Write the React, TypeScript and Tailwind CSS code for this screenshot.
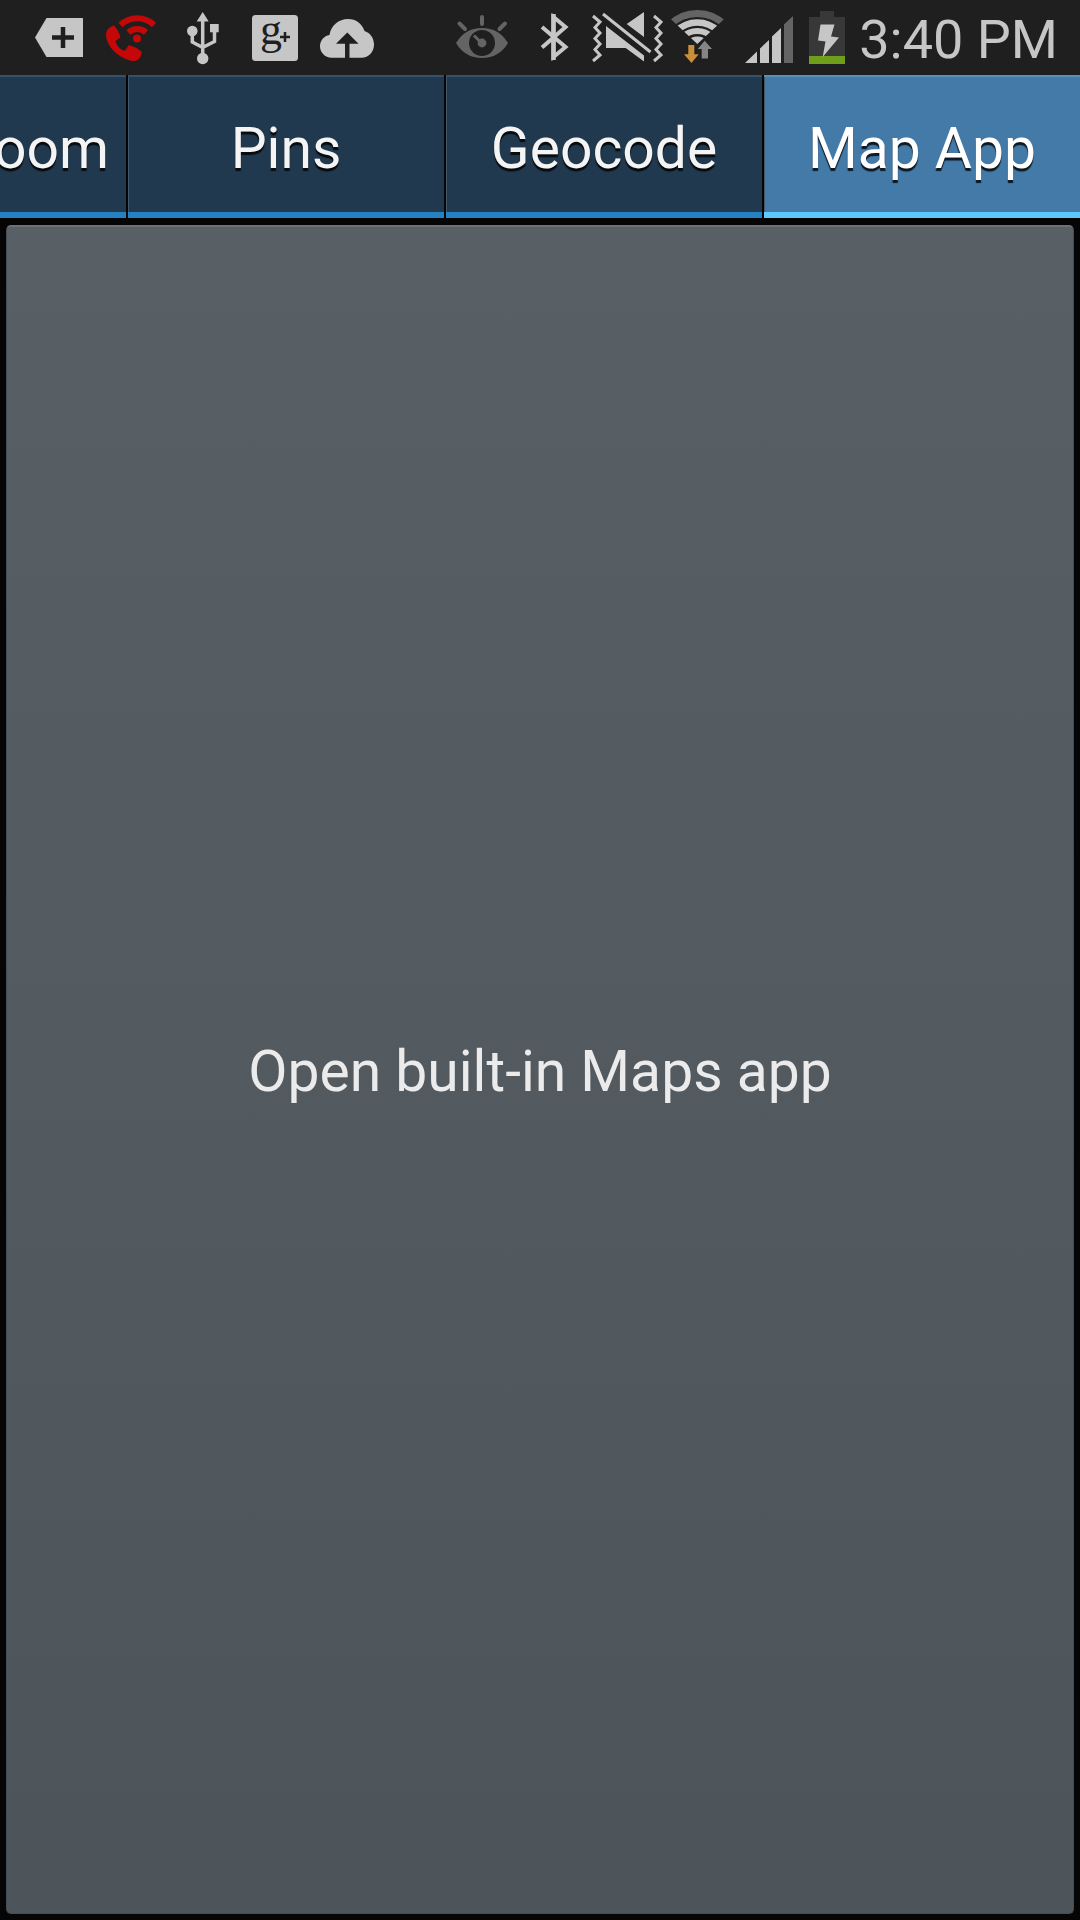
import type { ReactNode } from "react";

const LIGHT = "#c6c6c6";
const DIM = "#646464";
const BAR = "#1f1f1f";

function StatusIcon({ x, w = 72, label, children }: { x: number; w?: number; label: string; children: ReactNode }) {
  return (
    <svg width={w} height={75} viewBox={`${x} 0 ${w} 75`} role="img" aria-label={label} className="shrink-0">
      {children}
    </svg>
  );
}

function StatusBar() {
  return (
    <header className="flex h-[75px] items-center justify-between bg-[#1f1f1f] pr-[22px] pl-[23px]">
      <div className="flex">
        <StatusIcon x={23} label="More notifications">
          <path d="M35 37.500 46.500 18H82.500Q83 18 83 18.500V56.500Q83 57 82.500 57H46.500Z" fill={LIGHT} />
          <path d="M63 27V48M52 37.500H74" stroke={BAR} strokeWidth="4.500" />
        </StatusIcon>
        <StatusIcon x={95} label="Wi-Fi calling">
          <g fill="none" stroke="#c40808" strokeWidth="6">
            <path d="M120.500 25A24 24 0 0 1 154 25" />
            <path d="M128.500 32.500A13 13 0 0 1 146 32.500" />
          </g>
          <circle cx="137" cy="38.500" r="4" fill="#c40808" />
          <path
            d="M108 29Q111 25.500 114 25.500Q119 31 120.500 37.500L115.500 41Q117 48 124.500 51L129 45Q136 47 141.500 51.500Q142 56.500 138 59.500Q134.500 62 130 60.500C117 57 107 46 106 36Q106 31 108 29Z"
            fill="#c40808"
          />
        </StatusIcon>
        <StatusIcon x={167} label="USB connected">
          <path d="M202.700 12 208.700 21.500H196.700Z" fill={LIGHT} />
          <path d="M202.700 18V58M192.300 31V42L202.700 47.500M214.500 30V41.500L202.700 47.500" fill="none" stroke={LIGHT} strokeWidth="3.500" />
          <circle cx="192.300" cy="31" r="5.300" fill={LIGHT} />
          <circle cx="202.700" cy="58.500" r="5.700" fill={LIGHT} />
          <rect x="210" y="24" width="8.700" height="8.300" fill={LIGHT} />
        </StatusIcon>
        <StatusIcon x={239} label="Google+">
          <rect x="252" y="15" width="46" height="46" rx="3.500" fill={LIGHT} />
          <text x="260" y="44" fontSize="44" fill={BAR} fontFamily="Liberation Serif, serif">
            g
          </text>
          <path d="M285 32V42M280 37H290" stroke={BAR} strokeWidth="2.500" />
        </StatusIcon>
        <StatusIcon x={311} label="Upload complete">
          <path
            d="M331.500 57.700C325 57.700 320 52.500 320 46.300C320 40.500 324 36 329.500 35C331 25.500 338.500 19 348 19C356 19 362 23.500 364.500 31C370.500 33 374 38.500 374 44.500C374 52 368.500 57.700 361.500 57.700Z"
            fill={LIGHT}
          />
          <path d="M347.300 32.500 358.500 43.700H349.500V59H345V43.700H336Z" fill={BAR} />
        </StatusIcon>
      </div>

      <div className="flex items-center">
        <StatusIcon x={447} label="Smart stay">
          <path d="M456 43Q465 28 482 28T508 43Q499 58 482 58T456 43Z" fill={DIM} />
          <circle cx="482" cy="43" r="13" fill={BAR} />
          <circle cx="482" cy="43" r="4.400" fill={DIM} />
          <path d="M474 35.500 480 41.500" stroke={DIM} strokeWidth="3" />
          <path d="M482 17V24M459.500 23.500 465 29M505 23.500 499.500 29" stroke={DIM} strokeWidth="4" strokeLinecap="round" />
        </StatusIcon>
        <StatusIcon x={519} label="Bluetooth">
          <path d="M542 27 565.500 47 553.500 57V17L565.500 27 542 47.500" fill="none" stroke={LIGHT} strokeWidth="4" />
          <path d="M553.500 14V60" stroke={LIGHT} strokeWidth="4.500" />
        </StatusIcon>
        <StatusIcon x={591} label="Vibrate">
          <g fill="none" stroke={LIGHT} strokeWidth="3">
            <path d="M593 16 600 22 595 27.500 600 33 595 38.500 600 44 595 49.500 600 55 593 61" />
            <path d="M654 16 661 22 656 27.500 661 33 656 38.500 661 44 656 49.500 661 55 654 61" />
            <path d="M603 14 650.500 52" />
          </g>
          <path d="M626.700 24 644 12V37ZM606 26 644 55.500V61.500L625.700 48H606Z" fill={LIGHT} />
        </StatusIcon>
        <StatusIcon x={663} label="Wi-Fi">
          <clipPath id="wifi-fan">
            <path d="M697.300 44 668 16.500V0H727V16.500Z" />
          </clipPath>
          <g clipPath="url(#wifi-fan)" fill="none" stroke={LIGHT}>
            <circle cx="697.300" cy="52" r="38.500" stroke={DIM} strokeWidth="7" />
            <circle cx="697.300" cy="52" r="29.500" strokeWidth="6.500" />
            <circle cx="697.300" cy="52" r="21" strokeWidth="6" />
            <circle cx="697.300" cy="52" r="15.500" fill={LIGHT} stroke="none" />
          </g>
          <path d="M704.700 40.700 712 49H708V58.500H701.700V49H697.700Z" fill="#858585" stroke={BAR} strokeWidth="2" paintOrder="stroke" />
          <path d="M688.300 45H694.300V54.300H698.700L691.500 63 684 54.300H688.300Z" fill="#c9903a" stroke={BAR} strokeWidth="2" paintOrder="stroke" />
        </StatusIcon>
        <StatusIcon x={735} label="Signal strength">
          <path d="M745 63 757 51.500V63ZM760 63V48.500L769 40V63ZM772 63V36.500L781 28V63Z" fill={LIGHT} />
          <path d="M784 63V24.500L793 16V63Z" fill={DIM} />
        </StatusIcon>
        <StatusIcon x={807} w={52} label="Battery charging">
          <path d="M809 17H820V11H834V17H845V64H809Z" fill="#383838" />
          <path d="M809 56H845V64H809Z" fill="#6f9f1a" />
          <path d="M820.500 24.500H834.500L831 36.500 839 37.500 822.700 57 825.500 41.500 818 40.500Z" fill={LIGHT} />
        </StatusIcon>
        <time className="pt-[5px] text-[54px] leading-[70px] whitespace-nowrap text-[#c6c6c6]">3:40 PM</time>
      </div>
    </header>
  );
}

const TABS = [
  { label: "Pins", selected: false },
  { label: "Geocode", selected: false },
  { label: "Map App", selected: true },
];

function TabBar() {
  return (
    <div role="tablist" className="flex h-[143px] gap-[2px] text-[57px] leading-[68px]">
      <button
        type="button"
        role="tab"
        aria-selected={false}
        className="flex w-[126px] shrink-0 items-center justify-end overflow-hidden border-t-2 border-b-6 border-t-[#33516a] border-b-[#2681c4] bg-[#20394e] pt-2 pr-[17px] text-[#f4f4f4] [text-shadow:0_3px_1px_rgba(0,0,0,0.8)]"
      >
        oom
      </button>
      {TABS.map((tab) => (
        <button
          key={tab.label}
          type="button"
          role="tab"
          aria-selected={tab.selected}
          className={
            tab.selected
              ? "flex min-w-0 flex-1 items-center justify-center border-t-2 border-b-6 border-t-[#5c8fb8] border-b-[#5ccaff] bg-[#437aa8] pt-2 text-white shadow-[inset_1px_0_0_#41586a] [text-shadow:0_3px_1px_rgba(0,0,0,0.8)]"
              : "flex min-w-0 flex-1 items-center justify-center border-t-2 border-b-6 border-t-[#33516a] border-b-[#2681c4] bg-[#20394e] pt-2 text-[#f4f4f4] shadow-[inset_1px_0_0_#41586a] [text-shadow:0_3px_1px_rgba(0,0,0,0.8)]"
          }
        >
          {tab.label}
        </button>
      ))}
    </div>
  );
}

export default function App() {
  return (
    <div className="flex min-h-screen flex-col overflow-hidden bg-[#050505] font-[Roboto,sans-serif]">
      <StatusBar />
      <TabBar />
      <main className="flex flex-1 flex-col px-[6px] pt-[7px] pb-[6px]">
        <button
          type="button"
          className="flex-1 rounded-[5px] border border-t-2 border-[#454c53] border-t-[#6b7179] bg-linear-to-b from-[#585f65] to-[#4d555b] pt-1 text-[57px] leading-[68px] text-[#ebebeb]"
        >
          Open built-in Maps app
        </button>
      </main>
    </div>
  );
}
